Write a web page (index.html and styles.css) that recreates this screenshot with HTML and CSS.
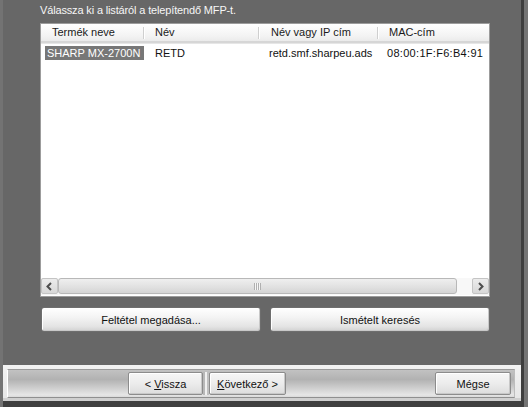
FILE: index.html
```html
<!DOCTYPE html>
<html lang="hu">
<head>
<meta charset="utf-8">
<title>MFP kiválasztása</title>
<link rel="stylesheet" href="styles.css">
</head>
<body>
<div class="screen">
  <div class="main">
    <div class="body">
      <div class="label">Válassza ki a listáról a telepítendő MFP-t.</div>
      <div class="list">
        <div class="head">
          <div class="hc c1">Termék neve</div>
          <div class="hc c2">Név</div>
          <div class="hc c3">Név vagy IP cím</div>
          <div class="hc c4">MAC-cím</div>
        </div>
        <div class="row">
          <div class="cell c1"><span class="sel">SHARP MX-2700N</span></div>
          <div class="cell c2">RETD</div>
          <div class="cell c3">retd.smf.sharpeu.ads</div>
          <div class="cell c4">08:00:1F:F6:B4:91</div>
        </div>
        <div class="fill"></div>
        <div class="hscroll">
          <div class="sbtn">
            <svg width="9" height="9" viewBox="0 0 9 9"><path d="M6 1 L2.5 4.5 L6 8" fill="none" stroke="#4d4d4d" stroke-width="2"/></svg>
          </div>
          <div class="track">
            <div class="thumb"><span class="grip"></span></div>
          </div>
          <div class="sbtn">
            <svg width="9" height="9" viewBox="0 0 9 9"><path d="M3 1 L6.5 4.5 L3 8" fill="none" stroke="#4d4d4d" stroke-width="2"/></svg>
          </div>
        </div>
      </div>
      <div class="actions">
        <button class="btn wide">Feltétel megadása...</button>
        <button class="btn wide">Ismételt keresés</button>
      </div>
    </div>
    <div class="footer">
      <div class="strip">
        <button class="btn nav">&lt; <u>V</u>issza</button>
        <span class="sep"></span>
        <button class="btn nav next"><u>K</u>övetkező &gt;</button>
        <button class="btn nav cancel">Mégse</button>
      </div>
    </div>
    <div class="bottom"></div>
  </div>
  <div class="edge"></div>
</div>
</body>
</html>
```

FILE: styles.css
```css
* { box-sizing: border-box; }
html, body { margin: 0; padding: 0; }
body {
  width: 528px;
  height: 407px;
  overflow: hidden;
  font-family: "Liberation Sans", Arial, sans-serif;
  font-size: 11px;
  background: #676767;
}
.screen {
  display: flex;
  width: 528px;
  height: 407px;
}
.main {
  width: 521px;
  display: flex;
  flex-direction: column;
  border-left: 3px solid #737373;
}
.edge {
  width: 7px;
  border-left: 3px solid #3e3e3e;
  background: #747474;
}
.body {
  height: 365px;
  padding-left: 37px;
  background: #676767;
}
.label {
  padding-top: 3px;
  height: 17px;
  line-height: 14px;
  color: #f6f6f6;
  margin-bottom: 6px;
  letter-spacing: -0.15px;
}
.list {
  width: 450px;
  height: 274px;
  border: 1px solid #9c9c9c;
  background: #fff;
  display: flex;
  flex-direction: column;
}
.head {
  display: flex;
  height: 19px;
  background: linear-gradient(#ffffff, #f3f3f3 70%, #ebebeb);
  border-bottom: 2px solid #d6d6d6;
  box-shadow: 0 1px 0 #e6e6e6;
}
.c1 { width: 104px; }
.c2 { width: 115px; }
.c3 { width: 119px; }
.c4 { flex: 1; }
.hc {
  line-height: 17px;
  color: #1a1a1a;
  padding-left: 11px;
  position: relative;
}
.hc.c2, .hc.c4 { padding-left: 10px; }
.hc.c1::after, .hc.c2::after, .hc.c3::after {
  content: "";
  position: absolute;
  right: 0;
  top: 3px;
  height: 12px;
  border-left: 1px solid #cfcfcf;
  border-right: 1px solid #ffffff;
}
.row {
  display: flex;
  padding-top: 2px;
  height: 16px;
  margin-top: 1px;
}
.cell {
  line-height: 14px;
  color: #111;
  white-space: nowrap;
}
.cell.c1 { padding-left: 4px; }
.cell.c2 { padding-left: 10px; }
.cell.c3 { padding-left: 9px; }
.cell.c4 { padding-left: 8px; letter-spacing: 0.3px; }
.sel {
  display: inline-block;
  width: 99px;
  padding-left: 2px;
  background: #777777;
  color: #ffffff;
}
.fill { flex: 1; }
.hscroll {
  height: 17px;
  display: flex;
  background: #f4f4f4;
  margin-bottom: 1px;
}
.sbtn {
  width: 17px;
  height: 16px;
  border: 1px solid #c4c4c4;
  border-radius: 2px;
  background: linear-gradient(#ececec, #d8d8d8);
  display: flex;
  align-items: center;
  justify-content: center;
}
.track {
  flex: 1;
  display: flex;
  padding-right: 15px;
  background: #f8f8f8;
}
.thumb {
  flex: 1;
  height: 16px;
  border: 1px solid #b8b8b8;
  border-radius: 3px;
  background: linear-gradient(#efefef, #e0e0e0 60%, #d4d4d4);
  display: flex;
  align-items: center;
  justify-content: center;
}
.grip {
  width: 7px;
  height: 7px;
  background: repeating-linear-gradient(90deg, #b0b0b0 0 1px, #f6f6f6 1px 2px);
}
.actions {
  display: flex;
  gap: 9px;
  margin-top: 10px;
  margin-left: 1px;
}
.btn {
  font-family: inherit;
  font-size: 11px;
  color: #111;
  border: 1px solid #6e6e6e;
  border-radius: 3px;
  background: linear-gradient(#ffffff, #f4f4f4 40%, #e4e4e4 80%, #d2d2d2);
  box-shadow: inset -1px -1px 0 #c8c8c8, inset 1px 1px 0 #ffffff;
  padding: 0;
  margin: 0;
}
.btn.wide {
  width: 220px;
  height: 25px;
}
.btn u { text-decoration: underline; }
.footer {
  height: 36px;
  padding: 4px 6px 0 4px;
  background: linear-gradient(#f2f2f2, #e6e6e6);
  border-bottom: 3px solid #cfcfcf;
}
.strip {
  height: 29px;
  display: flex;
  align-items: center;
  padding-left: 120px;
  padding-right: 3px;
  border-top: 1px solid #9a9a9a;
  border-left: 1px solid #ffffff;
  border-bottom: 1px solid #8f8f8f;
  border-right: 1px solid #bdbdbd;
  background: linear-gradient(#c2c2c2, #b2b2b2 35%, #c8c8c8 60%, #e6e6e6 92%, #dadada);
}
.btn.nav {
  height: 23px;
  width: 75px;
  border-color: #8c8c8c;
  border-radius: 2px;
  background: linear-gradient(#f6f6f6, #ececec 50%, #dcdcdc);
}
.sep {
  width: 6px;
  height: 23px;
  margin: 0;
  background: linear-gradient(90deg, #b8b8b8 0 2px, #f0f0f0 2px 4px, #c0c0c0 4px);
}
.btn.nav.next { width: 77px; }
.btn.cancel {
  margin-left: auto;
  width: 76px;
}
.bottom {
  flex: 1;
  background: #3f3f3f;
}
```
